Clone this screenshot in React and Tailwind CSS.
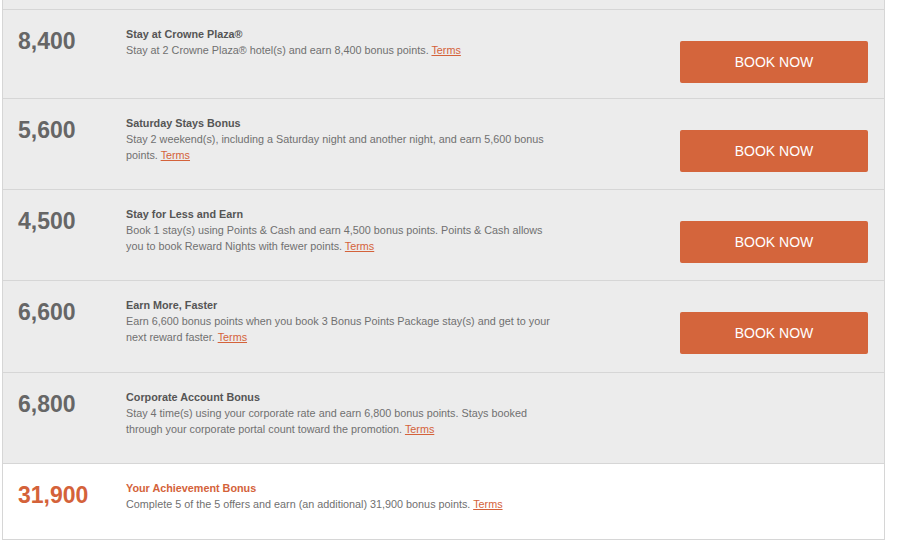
import React from 'react';

const offers = [
  {
    points: '8,400',
    title: 'Stay at Crowne Plaza®',
    text: 'Stay at 2 Crowne Plaza® hotel(s) and earn 8,400 bonus points.',
    h: 'h-[89px]',
    book: true,
  },
  {
    points: '5,600',
    title: 'Saturday Stays Bonus',
    text: 'Stay 2 weekend(s), including a Saturday night and another night, and earn 5,600 bonus points.',
    h: 'h-[91px]',
    book: true,
  },
  {
    points: '4,500',
    title: 'Stay for Less and Earn',
    text: 'Book 1 stay(s) using Points & Cash and earn 4,500 bonus points. Points & Cash allows you to book Reward Nights with fewer points.',
    h: 'h-[91px]',
    book: true,
  },
  {
    points: '6,600',
    title: 'Earn More, Faster',
    text: 'Earn 6,600 bonus points when you book 3 Bonus Points Package stay(s) and get to your next reward faster.',
    h: 'h-[92px]',
    book: true,
  },
  {
    points: '6,800',
    title: 'Corporate Account Bonus',
    text: 'Stay 4 time(s) using your corporate rate and earn 6,800 bonus points. Stays booked through your corporate portal count toward the promotion.',
    h: 'h-[91px]',
    book: false,
  },
];

function OfferRow({ offer, highlight }) {
  return (
    <div
      className={`flex pt-[16px] border-b border-[#d6d6d6] ${offer.h} ${
        highlight ? 'bg-white' : 'bg-[#ececec]'
      }`}
    >
      <div
        className={`w-[123px] shrink-0 pl-[15px] mt-[1px] text-[23px] leading-[28px] font-bold ${
          highlight ? 'text-[#d4623a]' : 'text-[#666666]'
        }`}
      >
        {offer.points}
      </div>
      <div className="w-[432px] text-[10.8px] leading-[16px]">
        <div className={`font-bold ${highlight ? 'text-[#d4623a]' : 'text-[#555555]'}`}>
          {offer.title}
        </div>
        <p className="text-[#707070]">
          {offer.text}{' '}
          <a href="#" className="text-[#d4623a] underline">
            Terms
          </a>
        </p>
      </div>
      {offer.book && (
        <div className="ml-auto pr-4 pt-[15px]">
          <button className="w-[188px] h-[42px] rounded-[2px] bg-[#d4653c] text-white text-[14px]">
            BOOK NOW
          </button>
        </div>
      )}
    </div>
  );
}

export default function App() {
  return (
    <div
      className="w-[900px] h-[553px] bg-white"
      style={{ fontFamily: '"Liberation Sans", Arial, sans-serif' }}
    >
      <div className="ml-[2px] w-[883px] border-l border-r border-[#d6d6d6]">
        <div className="h-[10px] bg-[#ececec] border-b border-[#d6d6d6]" />
        {offers.map((o) => (
          <OfferRow key={o.points} offer={o} />
        ))}
        <OfferRow
          highlight
          offer={{
            points: '31,900',
            title: 'Your Achievement Bonus',
            text: 'Complete 5 of the 5 offers and earn (an additional) 31,900 bonus points.',
            h: 'h-[76px]',
            book: false,
          }}
        />
      </div>
    </div>
  );
}
